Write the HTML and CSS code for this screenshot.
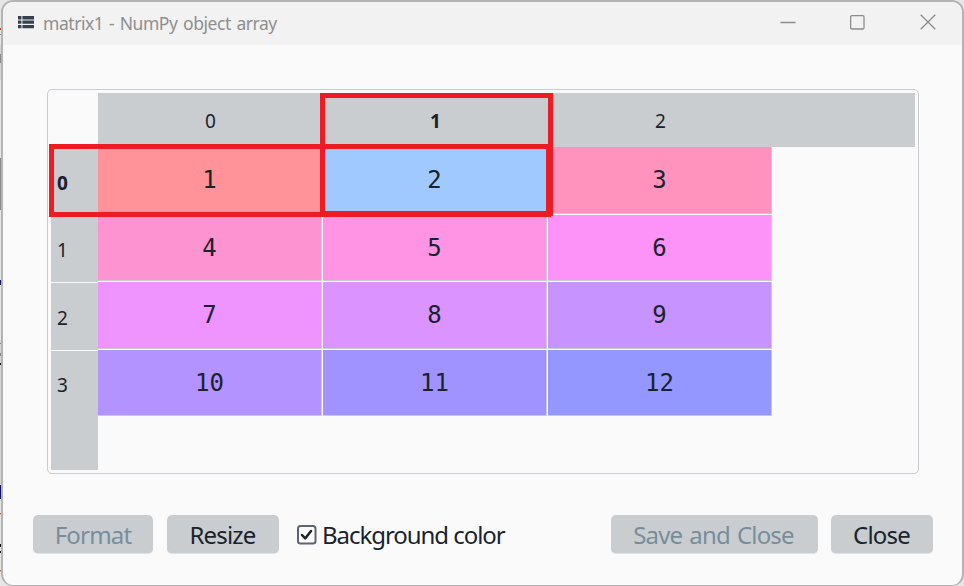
FILE: index.html
```
<!DOCTYPE html>
<html lang="en">
<head>
<meta charset="utf-8">
<title>matrix1 - NumPy object array</title>
<link rel="stylesheet" href="styles.css">
</head>
<body>
<svg class="backdrop" width="964" height="586" viewBox="0 0 964 586" aria-hidden="true">
  <path fill="#d4d4d4" d="M0 45h3v35H0zM0 340h3v150H0z"/>
  <path fill="#888" d="M0 54h3v9H0zM0 34h3v1H0zM0 343h3v1H0zM0 353h3v3H0zM0 158h3v52H0z"/>
  <path fill="#b34a18" d="M0 28h2v2H0zM0 513l3 1v2l-3-2zM0 570l3 1v2l-3-2z"/>
  <path fill="#101010" d="M0 363h3v2H0zM0 544h2v3H0zM0 551h3v2H0z"/>
  <path fill="#101060" d="M0 280h2v5H0zM0 485h1v14H0zM2 491h1v8H2z"/>
  <path fill="#999" d="M400 0h12v1h-12zM415 0h9v1h-9zM693 0h11v1h-11zM400 585h10v1h-10zM419 585h6v1h-6zM690 585h14v1h-14z"/>
</svg>
<main class="window">
  <header class="titlebar">
    <svg class="app-icon" width="16" height="13" viewBox="0 0 16 13"><path fill="#36404e" d="M0 0h3.4v3.4H0zM4.4 0H16v3.4H4.4zM0 4.5h3.4v3.3H0zM4.4 4.5H16v3.3H4.4zM0 8.9h3.4v3.4H0zM4.4 8.9H16v3.4H4.4z"/></svg>
    <h1 class="title">matrix1 - NumPy object array</h1>
    <div class="controls">
      <svg width="16" height="16" viewBox="0 0 16 16"><path d="M.5 8.5h15"/></svg>
      <svg width="16" height="16" viewBox="0 0 16 16"><rect x=".6" y="1.6" width="13.4" height="13.4" rx="1.2"/></svg>
      <svg width="16" height="16" viewBox="0 0 16 16"><path d="M.7.7l14.6 14.6M15.3.7.7 15.3"/></svg>
    </div>
  </header>
  <section class="table-frame">
    <div class="row-heads">
      <div class="corner"></div>
      <div class="row-head h0 current">0</div>
      <div class="row-head h1">1</div>
      <div class="row-head h2">2</div>
      <div class="row-head h3">3</div>
      <div class="row-fill"></div>
    </div>
    <div class="table-main">
      <div class="col-heads"><span>0</span><span class="current">1</span><span>2</span></div>
      <div class="cells">
        <div class="cell c1"><span>1</span></div><div class="cell c2"><span>2</span></div><div class="cell c3"><span>3</span></div>
        <div class="cell c4"><span>4</span></div><div class="cell c5"><span>5</span></div><div class="cell c6"><span>6</span></div>
        <div class="cell c7"><span>7</span></div><div class="cell c8"><span>8</span></div><div class="cell c9"><span>9</span></div>
        <div class="cell c10"><span>10</span></div><div class="cell c11"><span>11</span></div><div class="cell c12"><span>12</span></div>
      </div>
    </div>
    <div class="mark mark-column"></div>
    <div class="mark mark-row"></div>
  </section>
  <footer class="actions">
    <button class="btn format" disabled>Format</button>
    <button class="btn resize">Resize</button>
    <label class="check">
      <svg width="20" height="20" viewBox="0 0 20 20"><rect x="1" y="1" width="17.5" height="17.5" rx="2.5" fill="none" stroke="#5c6570" stroke-width="2"/><path d="M5 10l3.2 3.4L14 6" fill="none" stroke="#19232d" stroke-width="2.5" stroke-linecap="round" stroke-linejoin="round"/></svg>
      <span>Background color</span>
    </label>
    <button class="btn save" disabled>Save and Close</button>
    <button class="btn close">Close</button>
  </footer>
</main>
</body>
</html>
```
FILE: styles.css
```
* { box-sizing: border-box; }
body {
  margin: 0;
  width: 964px;
  height: 586px;
  overflow: hidden;
  background: #e6e6e6;
  color: #19232d;
  font-family: "Noto Sans", "Open Sans", sans-serif;
}
.backdrop { position: absolute; top: 0; left: 0; }
.window {
  position: relative;
  width: 963px;
  height: 586px;
  margin-left: 1px;
  border: 2px solid #b4b4b4;
  border-bottom-width: 1px;
  border-radius: 12px;
  background: #fafafa;
  overflow: hidden;
}
.titlebar {
  display: flex;
  align-items: center;
  height: 43px;
  padding: 0 26px 3px 15px;
  background: #f2f2f2;
}
.title {
  margin: 1px 0 0 9px;
  font-size: 17.5px;
  font-weight: 400;
  color: #8f8f8f;
  white-space: nowrap;
  letter-spacing: -0.45px;
  word-spacing: 1.5px;
}
.controls {
  display: flex;
  gap: 54px;
  margin-left: auto;
  fill: none;
  stroke: #8c8c8c;
  stroke-width: 1.3;
}
.table-frame {
  position: relative;
  display: flex;
  width: 872px;
  height: 385px;
  margin: 44px 0 0 44px;
  padding: 3px;
  border: 1px solid #c9cdd0;
  border-radius: 5px;
}
.row-heads { display: flex; flex-direction: column; width: 47px; height: 377px; font-size: 19px; }
.corner { height: 54px; }
.row-head {
  display: flex;
  align-items: center;
  padding: 3px 0 0 6px;
  background: #c9cdd0;
  border-bottom: 1px solid #fafafa;
}
.h0, .h1, .h2 { height: 68px; }
.h0 { padding-top: 5px; }
.h3 { height: 67px; padding-top: 1px; border-bottom: 0; }
.row-fill { flex: 1; background: #c9cdd0; }
.current { font-weight: 700; }
.table-main { width: 817px; }
.col-heads {
  display: grid;
  grid-template-columns: repeat(3, 225px);
  align-items: center;
  height: 54px;
  padding-top: 1px;
  background: #c9cdd0;
  font-size: 19px;
  text-align: center;
}
.cells {
  display: grid;
  grid-template-columns: 225px 225px 224px;
  grid-template-rows: 68px 67px 68px 66px;
  font: 24px "DejaVu Sans Mono", monospace;
}
.cell {
  display: flex;
  align-items: center;
  justify-content: center;
  border-right: 1px solid #c9cdd0;
  border-bottom: 1px solid #c9cdd0;
  margin: 0 1px 1px 0;
}
.cell:nth-child(3n) { margin-right: 0; }
.cell:nth-child(n+10) { margin-bottom: 0; }
.c1 { background: #ff9399; }
.c2 { background: #a0caff; }
.c3 { background: #ff93be; }
.c4 { background: #fd93d0; }
.c5 { background: #ff93e4; }
.c6 { background: #fd93f9; }
.c7 { background: #ee93ff; }
.c8 { background: #da93ff; }
.c9 { background: #c693ff; }
.c10 { background: #b393ff; }
.c11 { background: #a193ff; }
.c12 { background: #9397ff; }
.mark { position: absolute; border: 5px solid #ed1c24; }
.mark-column { left: 272px; top: 3px; width: 233px; height: 123px; }
.mark-row { left: 1px; top: 54px; width: 502px; height: 73px; }
.actions {
  display: flex;
  height: 39px;
  margin: 41px 29px 0 30px;
}
.btn {
  height: 39px;
  padding: 1px 0 0;
  border: 0;
  border-bottom: 1px solid #dfe1e3;
  border-radius: 5px;
  background: #c9cdd0;
  color: #19232d;
  font: 24px/1 "Noto Sans", sans-serif;
  letter-spacing: -0.8px;
  white-space: nowrap;
}
.btn:disabled { color: #788d9c; }
.format { width: 120px; }
.resize { width: 112px; margin-left: 14px; padding-right: 1px; }
.check {
  display: flex;
  align-items: center;
  gap: 5px;
  margin-left: 18px;
  font-size: 24px;
  letter-spacing: -1.05px;
  white-space: nowrap;
}
.save { width: 207px; margin-left: auto; padding-right: 2px; word-spacing: 1.5px; }
.close { width: 102px; margin-left: 13px; padding-right: 1px; }
```
